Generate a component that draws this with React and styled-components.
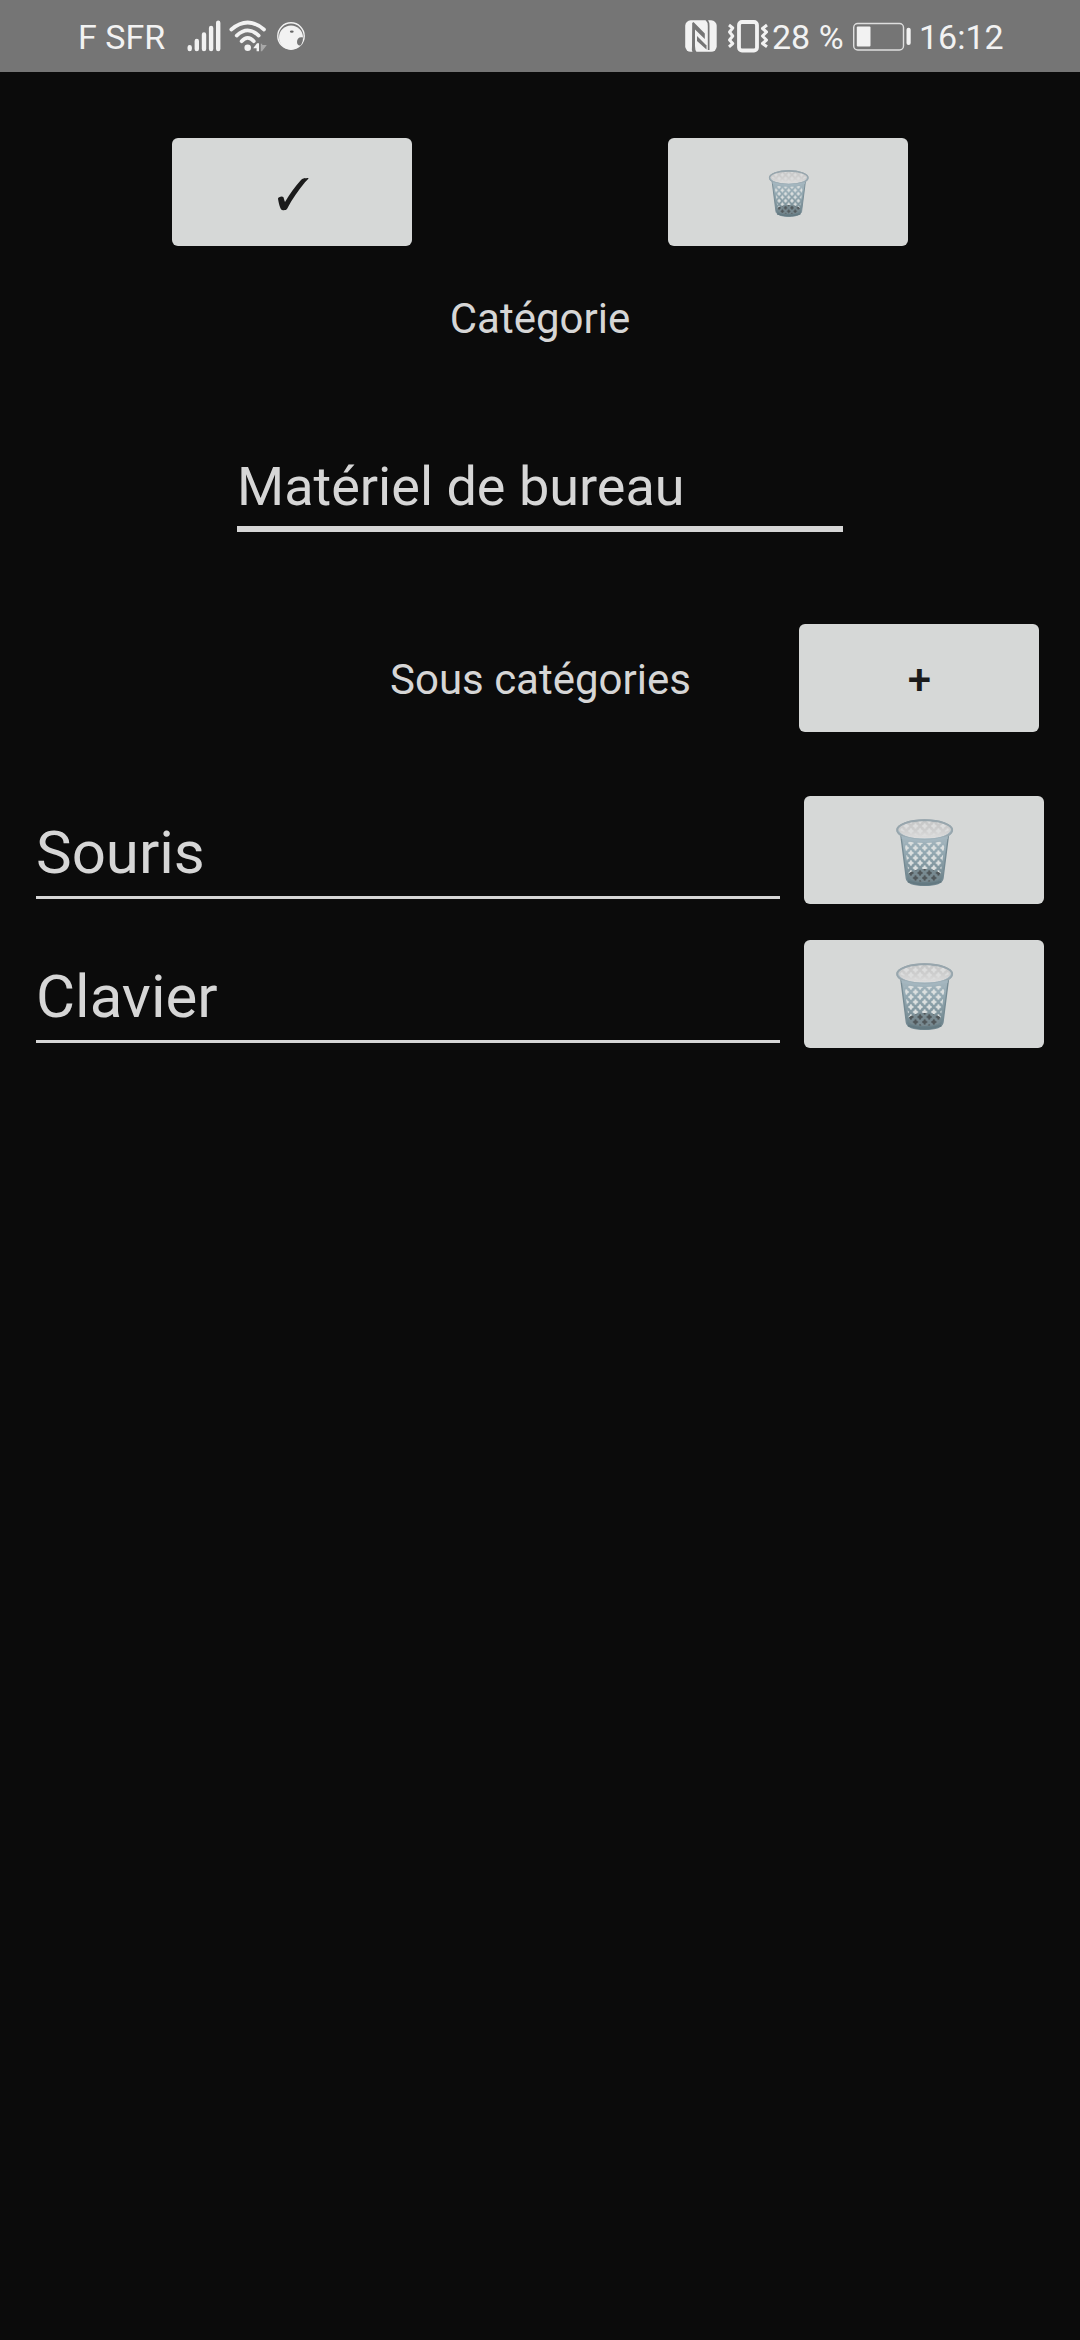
import React, { useId } from "react";
import styled, { createGlobalStyle } from "styled-components";

const GlobalStyle = createGlobalStyle`
  * { box-sizing: border-box; }
  body { margin: 0; background: #0b0b0b; }
`;

const Screen = styled.div`
  width: 1080px;
  height: 2340px;
  display: flex;
  flex-direction: column;
  overflow: hidden;
  background: #0b0b0b;
  color: #d6d6d6;
  font-family: Roboto, "Liberation Sans", sans-serif;
`;

const StatusBar = styled.header`
  height: 72px;
  flex: none;
  display: flex;
  justify-content: space-between;
  padding: 0 76px 0 78px;
  background: #757575;
  color: #f2f2f2;
`;

const StatusGroup = styled.div`
  display: flex;
  align-items: center;
`;

const StatusText = styled.span`
  font-size: 34px;
  line-height: 40px;
  height: 40px;
  margin-top: 2px;
  white-space: pre;
  width: ${(p) => p.$width}px;
`;

const StatusIcon = styled.svg`
  display: block;
  flex: none;
  height: 72px;
  width: ${(p) => p.$width}px;
`;

const Actions = styled.div`
  display: flex;
  justify-content: space-between;
  padding: 66px 172px 0;
`;

const Button = styled.button`
  width: 240px;
  height: 108px;
  flex: none;
  display: flex;
  align-items: center;
  justify-content: center;
  padding: 0;
  border: 0;
  border-radius: 6px;
  background: #d6d8d7;
  color: #1b1b1b;
  font: 500 42px/50px Roboto, "Liberation Sans", sans-serif;
`;

const AddButton = styled(Button)`
  padding: 4px 0 0 1px;
`;

const Label = styled.h2`
  margin: 0;
  font-size: 42px;
  font-weight: 400;
  line-height: 50px;
  text-align: center;
`;

const CategoryLabel = styled(Label)`
  margin-top: 48px;
`;

const CategoryField = styled.input`
  display: block;
  width: 606px;
  height: 88px;
  margin: 100px auto 0;
  padding: 3px 0 0;
  border: 0;
  border-bottom: 6px solid #d6d6d6;
  outline: 0;
  background: transparent;
  color: inherit;
  font: 400 54px/64px Roboto, "Liberation Sans", sans-serif;
`;

const SubHeader = styled.div`
  display: grid;
  grid-template-columns: 1fr 300px 1fr;
  align-items: center;
  padding: 0 41px;
  margin-top: 92px;

  ${Label} {
    grid-column: 2;
    padding-top: 4px;
    white-space: nowrap;
  }

  ${Button} {
    justify-self: end;
  }
`;

const List = styled.ul`
  list-style: none;
  margin: 64px 0 0;
  padding: 0 36px;
  display: flex;
  flex-direction: column;
  gap: 36px;
`;

const Row = styled.li`
  display: flex;
  justify-content: space-between;
  height: 108px;
`;

const RowField = styled.input`
  width: 744px;
  height: 103px;
  padding: 13px 0 0;
  border: 0;
  border-bottom: 3px solid #d6d6d6;
  outline: 0;
  background: transparent;
  color: inherit;
  font: 400 60px/70px Roboto, "Liberation Sans", sans-serif;
`;

const BinSvg = styled.svg`
  display: block;
  width: ${(p) => p.$size * 0.989}px;
  height: ${(p) => p.$size * 1.122}px;
  margin-top: ${(p) => p.$drop}px;
  margin-left: ${(p) => p.$shift}px;
`;

const CheckSvg = styled.svg`
  display: block;
  width: 32px;
  height: 34px;
  margin: 3px 0 0 1px;
`;

function Bin({ size, drop, shift }) {
  const id = "bin" + useId().replace(/[^a-zA-Z0-9]/g, "");
  const url = (name) => `url(#${id}${name})`;
  const body =
    "M17 44 L34 178 C36 190 55 199 89 199 C123 199 142 190 144 178 L161 44 Z";
  const hole = "M-2 -8.5 H2 L3 -4.500 L7.500 -2 V2 L3 4.500 L2 8.500 H-2 L-3 4.500 L-7.500 2 V-2 L-3 -4.500Z";
  const holes = (
    <>
      <path d={hole} transform="translate(13.75 15)" />
      <path d={hole} transform="translate(0 0)" />
      <path d={hole} transform="translate(27.5 0)" />
      <path d={hole} transform="translate(0 30)" />
      <path d={hole} transform="translate(27.5 30)" />
    </>
  );
  return (
    <BinSvg viewBox="0 0 178 202" $size={size} $drop={drop} $shift={shift} aria-label="Supprimer">
      <defs>
        <linearGradient id={id + "g"} x1="0" y1="0" x2="0" y2="1">
          <stop offset="0" stopColor="#a9b9c1" />
          <stop offset="0.35" stopColor="#94a9b2" />
          <stop offset="0.75" stopColor="#7b9098" />
          <stop offset="1" stopColor="#637981" />
        </linearGradient>
        <linearGradient id={id + "r"} x1="0" y1="0" x2="0" y2="1">
          <stop offset="0" stopColor="#98a5ac" />
          <stop offset="1" stopColor="#a5b8c1" />
        </linearGradient>
        <linearGradient id={id + "i"} x1="0" y1="0" x2="0" y2="1">
          <stop offset="0" stopColor="#c6c7c7" />
          <stop offset="0.5" stopColor="#cdcdcd" />
          <stop offset="1" stopColor="#e0e0e0" />
        </linearGradient>
        <pattern id={id + "l"} width="27.5" height="30" x="75.25" y="162" patternUnits="userSpaceOnUse">
          <g fill="#dbdfdf">{holes}</g>
        </pattern>
        <pattern id={id + "d"} width="27.5" height="30" x="75.25" y="162" patternUnits="userSpaceOnUse">
          <g fill="#50575a">{holes}</g>
        </pattern>
        <pattern id={id + "b"} width="27.5" height="30" x="75.25" y="6" patternUnits="userSpaceOnUse">
          <g fill="#dcdddd">{holes}</g>
        </pattern>
        <clipPath id={id + "p"}>
          <path d="M28 66 Q89 78 150 66 L136 174 Q134 188 89 189 Q44 188 42 174Z" />
        </clipPath>
        <clipPath id={id + "t"}>
          <path d="M14 33 C16 14 50 6 89 6 C128 6 162 14 164 33 Q125 52 89 51 Q53 52 14 33Z" />
        </clipPath>
      </defs>
      <path d={body} fill={url("g")} stroke="#758a93" strokeWidth="4" />
      <g clipPath={url("p")}>
        <rect width="178" height="202" fill={url("l")} />
        <ellipse cx="89" cy="174" rx="52" ry="24" fill="#788a91" />
        <ellipse cx="89" cy="174" rx="52" ry="24" fill={url("d")} />
      </g>
      <path d="M39 188 Q89 205 139 188" fill="none" stroke="#647981" strokeWidth="6" />
      <ellipse cx="89" cy="33" rx="82" ry="29" fill={url("i")} stroke={url("r")} strokeWidth="6" />
      <ellipse cx="89" cy="33" rx="78" ry="26" fill={url("b")} clipPath={url("t")} />
      <path d="M8 36 C16 55 50 62 89 62 C128 62 162 55 170 36" fill="none" stroke="#a6b8c1" strokeWidth="7" />
      <ellipse cx="89" cy="33" rx="83" ry="30" fill="none" stroke="#98a6ad" strokeWidth="5" />
      <path d="M20 55 Q89 76 158 55" fill="none" stroke="#a4b6bf" strokeWidth="8" />
    </BinSvg>
  );
}

const Check = () => (
  <CheckSvg viewBox="0 0 96 102" aria-label="Valider">
    <path
      d="M95 3 C92 8 88 11 84 16 C65 39 46 66 30 96 C27 100 21 100 15 99 C9 96 5 76 3 65 C3 60 15 56 19 60 C21 64 22 71 24 75 C39 50 53 31 72 9 C79 2 85 5 90 3 Z"
      fill="#1b1b1b"
    />
  </CheckSvg>
);

const SignalIcons = () => (
  <StatusIcon $width={130} viewBox="180 0 130 72">
    <g stroke="#f2f2f2" strokeWidth="4.4" strokeLinecap="round">
      <path d="M189.7 47.2V49M196.8 41V49M204 34.4V49M211.1 28V49M218.2 22.8V49" />
    </g>
    <g fill="none" stroke="#f2f2f2" strokeWidth="3.7" strokeLinecap="round">
      <path d="M231.3 29.5Q247.7 15.5 264 29.5" />
      <path d="M236.7 35.6Q247.7 25.2 258.7 35.6" />
      <path d="M241.6 41.2Q247.7 34.5 253.8 41.2" />
    </g>
    <circle cx="247.7" cy="47.7" r="3.3" fill="#f2f2f2" />
    <path d="M253.2 48.2L257 43.2H259V51.3H256.6V48.2Z" fill="#f2f2f2" />
    <path d="M260.800 43.800H262.200V51.300H260.800ZM262.200 45H266.800L262.200 51Z" fill="#a8a8a8" />
    <circle cx="291" cy="36" r="13.2" fill="#757575" stroke="#f2f2f2" strokeWidth="1.4" />
    <circle cx="291" cy="37.600" r="12" fill="#f2f2f2" />
    <ellipse cx="291.8" cy="31.6" rx="1.9" ry="1.2" fill="#666" />
    <path d="M303 37.500C299.500 36.500 297 38.500 297 42C297 44.500 298.500 46 300.500 45.500C302 43.500 303 41 303 37.500Z" fill="#757575" />
  </StatusIcon>
);

const AlertIcons = () => (
  <StatusIcon $width={90} viewBox="681 0 90 72">
    <rect x="684.200" y="20.300" width="31.500" height="31.500" rx="5.500" fill="#f2f2f2" />
    <g fill="#757575">
      <path d="M691.200 23L692.500 22L703.800 33.500V39L694 29.500V46Q694 50 695.500 52H691.500Q690.500 50 691 46Z" />
      <path d="M696 36L705.500 45.500V49.500L696 41Z" />
      <path d="M704.500 20H707Q708.500 22 708.500 26V50H706.800V26Q706.800 22 704.500 20Z" />
    </g>
    <rect x="738" y="22" width="18" height="28.500" rx="3" fill="none" stroke="#f2f2f2" strokeWidth="3.800" />
    <g fill="none" stroke="#f2f2f2" strokeWidth="3" strokeLinejoin="round">
      <path d="M728 25L731.800 28L728.500 32L731.800 36L728.500 40L731.800 43.500L728 46.800" />
      <path d="M766 25L761.500 28.500L765.500 32L761.500 36L765.500 40L761.500 43.500L766 46.800" />
    </g>
  </StatusIcon>
);

const BatteryIcon = () => (
  <StatusIcon $width={68} viewBox="850 0 68 72">
    <rect x="852.700" y="23.500" width="49.800" height="26.500" rx="4" fill="none" stroke="#dedede" strokeWidth="1.400" />
    <rect x="855.800" y="26.500" width="13.700" height="20" rx="1" fill="#f2f2f2" />
    <rect x="905.500" y="27.800" width="4.200" height="17.200" rx="2" fill="#f2f2f2" />
  </StatusIcon>
);

const subCategories = ["Souris", "Clavier"];

export default function App() {
  return (
    <>
      <GlobalStyle />
      <Screen>
        <StatusBar>
          <StatusGroup>
            <StatusText $width={102}>F SFR</StatusText>
            <SignalIcons />
          </StatusGroup>
          <StatusGroup>
            <AlertIcons />
            <StatusText $width={79}>28 %</StatusText>
            <BatteryIcon />
            <StatusText $width={85}>16:12</StatusText>
          </StatusGroup>
        </StatusBar>
        <Actions>
          <Button><Check /></Button>
          <Button><Bin size={42} drop={3} shift={1} /></Button>
        </Actions>
        <CategoryLabel>Catégorie</CategoryLabel>
        <CategoryField defaultValue="Matériel de bureau" />
        <SubHeader>
          <Label>Sous catégories</Label>
          <AddButton>+</AddButton>
        </SubHeader>
        <List>
          {subCategories.map((name) => (
            <Row key={name}>
              <RowField defaultValue={name} />
              <Button><Bin size={60} drop={6} shift={1} /></Button>
            </Row>
          ))}
        </List>
      </Screen>
    </>
  );
}
